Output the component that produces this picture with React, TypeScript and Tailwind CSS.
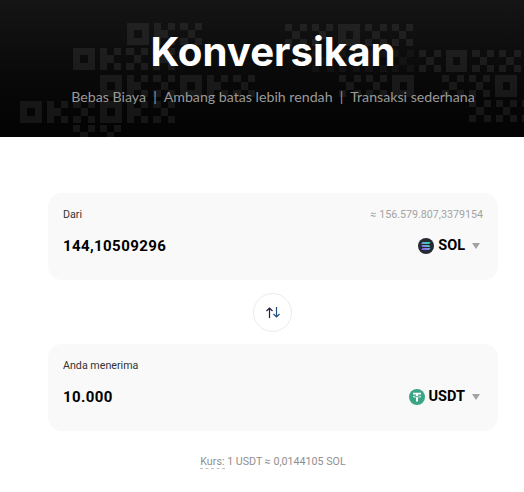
const GLYPHS: Record<string, string[]> = {
  O: ['111', '101', '111'],
  K: ['101', '110', '101'],
  X: ['101', '010', '101'],
};

// rows of the pixel "logo" pattern behind the title
const ROWS = [
  { x: 127, y: 23, text: 'OKX', alpha: 0.07 },
  { x: 285, y: 24, text: 'XXOXX', alpha: 0.07 },
  { x: 73, y: 48, text: 'OKXX', alpha: 0.07 },
  { x: 312, y: 50, text: 'XXKX', alpha: 0.035 },
  { x: 419, y: 50, text: 'XOXX', alpha: 0.07 },
  { x: 100, y: 75, text: 'OKXOKX', alpha: 0.07 },
  { x: 339, y: 75, text: 'XXO', alpha: 0.07 },
  { x: 442, y: 75, text: 'XXO', alpha: 0.07 },
  { x: 20, y: 101, text: 'OKXOKX', alpha: 0.07 },
  { x: 469, y: 100, text: 'XXX', alpha: 0.07 },
  { x: 73, y: 125, text: 'XX', alpha: 0.07 },
];

function PixelPattern() {
  const cell = 7.25;
  const pitch = 26.67;
  return (
    <svg className="absolute inset-0" width="524" height="137" viewBox="0 0 524 137" shapeRendering="crispEdges">
      {ROWS.map((row) =>
        row.text.split('').map((ch, i) =>
          GLYPHS[ch].map((line, r) =>
            line.split('').map((on, c) =>
              on === '1' ? (
                <rect
                  key={`${row.x}-${row.y}-${i}-${r}-${c}`}
                  x={row.x + i * pitch + c * cell}
                  y={row.y + r * cell}
                  width={cell}
                  height={cell}
                  fill="#ffffff"
                  fillOpacity={row.alpha}
                />
              ) : null
            )
          )
        )
      )}
    </svg>
  );
}

function SolIcon() {
  return (
    <svg width="16" height="16" viewBox="0 0 16 16">
      <defs>
        <linearGradient id="sol" x1="0" y1="1" x2="1" y2="0">
          <stop offset="0" stopColor="#9945ff" />
          <stop offset="0.5" stopColor="#6f9fd8" />
          <stop offset="1" stopColor="#14f195" />
        </linearGradient>
      </defs>
      <circle cx="8" cy="8" r="8" fill="#262a33" />
      <path d="M4.500 3.900h8l-1.400 2h-8zM3.100 7h8l1.400 2h-8zM4.500 10.100h8l-1.400 2h-8z" fill="url(#sol)" />
    </svg>
  );
}

function UsdtIcon() {
  return (
    <svg width="16" height="16" viewBox="0 0 16 16">
      <circle cx="8" cy="8" r="8" fill="#3aa585" />
      <path d="M4 3.800h8v1.700H9v1.300c1.700.1 3.200.4 3.200.9s-1.500.8-3.200.9v3.900H7V8.600c-1.700-.1-3.200-.4-3.200-.9S5.300 6.900 7 6.800V5.500H4z" fill="#fff" />
      <path d="M4.600 7.700c.6.300 1.900.5 3.400.5s2.800-.2 3.400-.5c-.6-.3-1.900-.4-3.400-.4s-2.800.1-3.400.4z" fill="#3aa585" />
    </svg>
  );
}

function Caret() {
  return <span className="ml-[7px] h-0 w-0 border-x-[4.5px] border-t-[6px] border-x-transparent border-t-[#a3a3a3]" />;
}

interface CardProps {
  label: string;
  hint?: string;
  amount: string;
  token: string;
  icon: React.ReactNode;
}

function Card({ label, hint, amount, token, icon }: CardProps) {
  return (
    <div className="h-[87px] rounded-[14px] bg-[#f9f9f9] pl-[15px] pr-[18px] pt-[15px]">
      <div className="flex h-[14px] items-center justify-between text-[10.7px] leading-[14px]">
        <span className="text-[#333333]">{label}</span>
        {hint && <span className="-mr-[3px] text-[#a3a3a3]">{hint}</span>}
      </div>
      <div className="mt-[14px] flex h-[20px] items-center justify-between">
        <span className="text-[15px] font-bold tracking-[0.4px] text-black">{amount}</span>
        <div className="-mt-[1px] flex items-center">
          {icon}
          <span className="ml-[4px] text-[14.5px] font-bold text-black">{token}</span>
          <Caret />
        </div>
      </div>
    </div>
  );
}

export default function App() {
  return (
    <div className="min-h-[492px] bg-white font-['Roboto',sans-serif]">
      <header className="relative h-[137px] overflow-hidden bg-gradient-to-b from-[#151515] to-[#030303]">
        <PixelPattern />
        <div className="relative flex flex-col items-center pl-[22px] pt-[27px]">
          <h1 className="font-['Inter',sans-serif] text-[40.2px] font-bold leading-[50px] text-white">Konversikan</h1>
          <p className="mt-[10px] whitespace-pre font-['Lato',sans-serif] text-[14.2px] leading-[20px] text-[#9a9a9a]">
            Bebas Biaya{'  |  '}Ambang batas lebih rendah{'  |  '}Transaksi sederhana
          </p>
        </div>
      </header>

      <main className="ml-12 w-[450px] pt-14">
        <Card label="Dari" hint="≈ 156.579.807,3379154" amount="144,10509296" token="SOL" icon={<SolIcon />} />
        <div className="flex h-16 items-center justify-center">
          <button className="mr-px flex h-[39px] w-[39px] items-center justify-center rounded-full border border-[#ebebeb] bg-white">
            <svg width="16" height="11" viewBox="0 0 16 11" fill="none" strokeWidth="1.2">
              <path d="M4.500 11V1M1.500 4L4.500 1l3 3" stroke="#2a1a40" />
              <path d="M11.500 0v10M8.500 7l3 3 3-3" stroke="#1f4f7a" />
            </svg>
          </button>
        </div>
        <Card label="Anda menerima" amount="10.000" token="USDT" icon={<UsdtIcon />} />
        <p className="mt-[23px] text-center text-[10.7px] leading-[16px] text-[#8f8f8f]">
          <span className="border-b border-dashed border-[#c4c4c4]">Kurs:</span> 1 USDT ≈ 0,0144105 SOL
        </p>
      </main>
    </div>
  );
}
